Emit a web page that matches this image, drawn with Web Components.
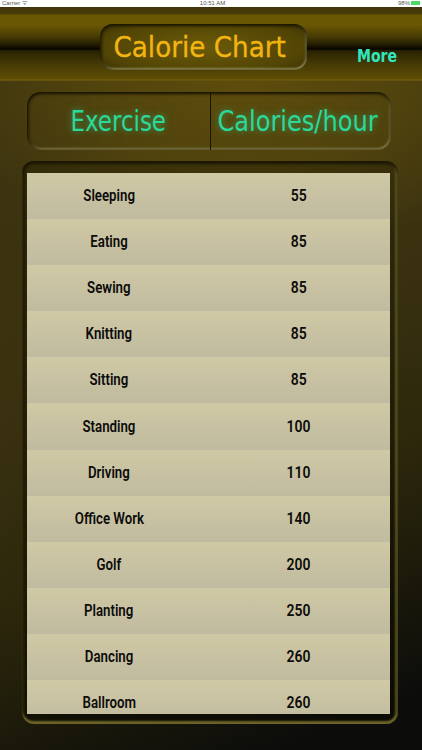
<!DOCTYPE html>
<html><head><meta charset="utf-8">
<style>
html,body{margin:0;padding:0;width:422px;height:750px;overflow:hidden;background:#111}
</style></head><body>
<calorie-app>
<status-bar></status-bar>
<app-header title="Calorie Chart" action="More"></app-header>
<column-head a="Exercise" b="Calories/hour"></column-head>
<chart-frame>
<chart-row name="Sleeping" cal="55"></chart-row>
<chart-row name="Eating" cal="85"></chart-row>
<chart-row name="Sewing" cal="85"></chart-row>
<chart-row name="Knitting" cal="85"></chart-row>
<chart-row name="Sitting" cal="85"></chart-row>
<chart-row name="Standing" cal="100"></chart-row>
<chart-row name="Driving" cal="110"></chart-row>
<chart-row name="Office Work" cal="140"></chart-row>
<chart-row name="Golf" cal="200"></chart-row>
<chart-row name="Planting" cal="250"></chart-row>
<chart-row name="Dancing" cal="260"></chart-row>
<chart-row name="Ballroom" cal="260"></chart-row>
</chart-frame>
</calorie-app>
<script>
function def(name,css,html,attrs){
  customElements.define(name,class extends HTMLElement{
    connectedCallback(){
      if(this.shadowRoot)return;
      const r=this.attachShadow({mode:'open'});
      let h=html;
      (attrs||[]).forEach(a=>{h=h.split('{'+a+'}').join(this.getAttribute(a)||'')});
      r.innerHTML='<style>'+css+'</style>'+h;
    }
  });
}
def('calorie-app',`:host{display:flex;flex-direction:column;width:422px;height:750px;overflow:hidden;
 background:radial-gradient(ellipse 300px 170px at 58% 85px,#5c4c0c 0%,rgba(88,73,12,.75) 50%,rgba(70,58,12,0) 100%),
 linear-gradient(158deg,#3e3510 0%,#3a3110 45%,#2d280c 66%,#1c1a0a 80%,#0c0c0b 94%)}`,`<slot></slot>`);
def('status-bar',`:host{display:flex;justify-content:space-between;align-items:flex-start;height:7px;background:#fff;
 font:6px/7px "Liberation Sans",sans-serif;color:#555;padding:0 2px;box-sizing:border-box;flex:none}
 .b{display:inline-block;width:9px;height:4px;background:#4cd964;margin-left:1px}`,`<span>Carrier ᯤ</span><span>10:51 AM</span><span>98%<i class="b"></i></span>`);
def('app-header',`:host{display:block;height:74px;flex:none;position:relative;box-sizing:border-box;
 background:linear-gradient(#3f340a 0,#4a3c08 7px,#6a5703 8px,#6a5704 18px,#463a04 30px,#1c1702 39px,#050400 42px,#2a2302 44px,#4b3e05 60px,#5e4d06 72px,#7a6410 73px,#4f410b 74px)}
 .pill{position:absolute;left:100px;top:17px;width:207px;height:46px;box-sizing:border-box;border-radius:13px;
 background:radial-gradient(ellipse 60% 70% at 50% 50%,#6a5a08,#524505 80%,#423804);
 box-shadow:inset 0 2px 3px #1a1600,inset 2px 0 3px #2a2400,inset 0 -2px 2px #9a9560,inset -2px 0 2px #6d6630;
 display:flex;align-items:center;justify-content:center;
 font:29px "DejaVu Sans",sans-serif;color:#f2b512}
 .pill span{display:inline-block;transform:scaleX(.905);white-space:nowrap;padding-right:8px;-webkit-text-stroke:.3px #f2b512}
 .more{position:absolute;left:357px;top:38px;font:bold 18px "DejaVu Sans",sans-serif;color:#2fe8c0;transform:scaleX(.78);transform-origin:left}`,
 `<div class="pill"><span>{title}</span></div><div class="more">{action}</div>`,['title','action']);
def('column-head',`:host{display:grid;grid-template-columns:184px 1fr;height:58px;margin:11px 31px 0 27px;flex:none;box-sizing:border-box;border-radius:14px;
 box-shadow:inset 0 2px 3px #181300,inset 2px 0 3px #241e04,inset 0 -2px 2px #8b8350,inset -2px 0 2px #6f6a3a;
 font:27.5px "DejaVu Sans",sans-serif;color:#2bd99b;text-shadow:0 0 8px rgba(40,220,150,.55)}
 div{display:flex;align-items:center;justify-content:center;min-width:0}
 span{display:inline-block;white-space:nowrap}
 .a{border-right:1px solid #191500}
 .a span{transform:scaleX(.835)}
 .b{padding-right:8px}
 .b span{transform:scaleX(.875)}`,
 `<div class="a"><span>{a}</span></div><div class="b"><span>{b}</span></div>`,['a','b']);
def('chart-frame',`:host{display:block;flex:none;height:563px;margin:11px 24px 0 22px;box-sizing:border-box;padding:12px 8px 10px 5px;border-radius:12px;
 background:linear-gradient(rgba(20,17,3,.3),rgba(10,9,2,.6));box-shadow:inset 0 3px 3px #1a1602,inset 0 -3px 2px #6c6527,inset -3px 0 2px #5a5420,inset 3px 0 2px #221e04}
 .s{height:541px;overflow:hidden;background:#cfc8a4}`,`<div class="s"><slot></slot></div>`);
def('chart-row',`:host{display:grid;grid-template-columns:164px 1fr;height:46.1px;
 background:linear-gradient(#d0c9a5,#c0baa0);
 font:600 17px Roboto,sans-serif;color:#0c0c0a}
 div{display:flex;justify-content:center;align-items:center;padding-bottom:2px}
 span{display:inline-block;transform:scaleX(.78);white-space:nowrap}
 .c{padding-left:17px}
 .c span{transform:scaleX(.82)}`,`<div><span>{name}</span></div><div class="c"><span>{cal}</span></div>`,['name','cal']);
</script>
</body></html>
